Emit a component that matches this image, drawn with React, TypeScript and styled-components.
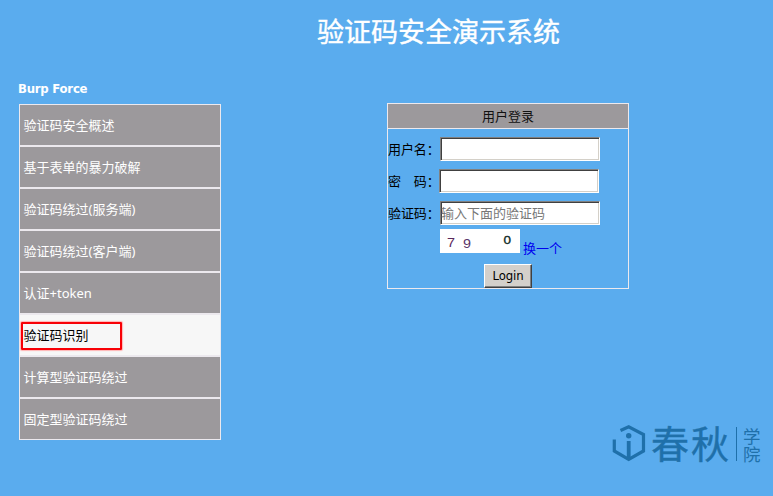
import React from "react";
import styled, { createGlobalStyle } from "styled-components";

const Global = createGlobalStyle`
  * { box-sizing: border-box; }
  body {
    margin: 0;
    background: #5aacee;
    font: 13px/16px "Noto Sans", "Noto Sans CJK SC", sans-serif;
    color: #000;
  }
`;

const Page = styled.div`
  width: 773px;
  height: 496px;
  display: grid;
  grid-template-rows: 79px 1fr;
  overflow: hidden;
`;

const Title = styled.h1`
  margin: 0;
  padding: 12px 0 0 317px;
  font: 400 27px/38px "Noto Sans CJK SC", sans-serif;
  -webkit-text-stroke: 0.4px #fff;
  color: #fff;
  white-space: nowrap;
`;

const Content = styled.div`
  display: flex;
  align-items: flex-start;
`;

const Sidebar = styled.nav`
  width: 202px;
  margin-left: 19px;
`;

const Heading = styled.h2`
  margin: 0 0 0 -1px;
  height: 25px;
  font: 700 13px/19px "DejaVu Sans Condensed", "Noto Sans", sans-serif;
  letter-spacing: -0.23px;
  color: #fff;
`;

const Menu = styled.ul`
  margin: 0;
  padding: 0;
  list-style: none;
`;

const MenuItem = styled.li<{ $active?: boolean }>`
  height: 42px;
  display: flex;
  align-items: center;
  padding-left: ${(p) => (p.$active ? 1 : 3.5)}px;
  border: 1px solid #ece9ee;
  background: ${(p) => (p.$active ? "#f7f7f7" : "#9c999c")};
  color: ${(p) => (p.$active ? "#000" : "#fff")};
`;

const Marker = styled.span`
  width: 101px;
  height: 28px;
  margin-top: 1px;
  padding-left: 0.5px;
  border: 2px solid #f80006;
  border-radius: 1px;
  line-height: 23px;
  box-shadow: 0 0 1px 1px #ffb4b4;
`;

const LoginForm = styled.form`
  width: 242px;
  height: 186px;
  margin: 24px 0 0 166px;
  border: 1px solid #ece9ee;
`;

const FormTitle = styled.div`
  height: 25px;
  border-bottom: 1px solid #ece9ee;
  background: #9c999c;
  text-align: center;
  line-height: 24px;
  color: #111;
`;

const Fields = styled.div`
  display: grid;
  gap: 8px;
  padding-top: 8px;
`;

const Field = styled.label<{ $labelWidth: number }>`
  display: grid;
  grid-template-columns: ${(p) => p.$labelWidth}px 160px;
  height: 24px;
  align-items: center;
  white-space: pre;
`;

const FieldLabel = styled.span`
  letter-spacing: -0.1px;
`;

const Input = styled.input`
  width: 160px;
  height: 24px;
  padding: 0;
  border: 1px solid;
  border-color: #808080 #fff #fff #808080;
  border-radius: 0;
  box-shadow: inset 1px 1px #404040, inset -1px -1px #d4d0c8;
  background: #fff;
  font: inherit;
  outline: 0;
  &::placeholder { color: #777; opacity: 1; }
`;

const CaptchaRow = styled.div`
  display: flex;
  height: 28px;
  margin: 4px 0 0 52px;
  align-items: flex-start;
`;

const Refresh = styled.a`
  margin: 11px 0 0 3px;
  color: #0000ee;
  text-decoration: none;
`;

const LoginButton = styled.button`
  display: block;
  width: 48px;
  height: 24px;
  margin: 7px auto 0;
  padding: 0;
  border: 1px solid;
  border-color: #fff #404040 #404040 #fff;
  box-shadow: inset -1px -1px #808080;
  background: #d4d0cb;
  font: 13px/22px "DejaVu Sans Condensed", "Noto Sans", sans-serif;
  letter-spacing: -0.1px;
  color: #000;
`;

const Watermark = styled.div`
  position: absolute;
  left: 612px;
  top: 425px;
  display: flex;
  align-items: flex-start;
  height: 37px;
  font-family: "Noto Sans CJK SC", sans-serif;
  color: #1f70aa;
`;

const BrandName = styled.span`
  width: 83px;
  margin-left: 5px;
  font-size: 38px;
  line-height: 34px;
  letter-spacing: 2px;
  -webkit-text-stroke: 0.4px #1f70aa;
  white-space: nowrap;
`;

const BrandSuffix = styled.span`
  width: 25px;
  height: 34px;
  margin: 2px 0 0 2px;
  padding-left: 6px;
  border-left: 1px solid #1f70aa;
  font-size: 17.5px;
  line-height: 17.5px;
  word-break: break-all;
`;

const MENU = [
  "验证码安全概述",
  "基于表单的暴力破解",
  "验证码绕过(服务端)",
  "验证码绕过(客户端)",
  "认证+token",
  "验证码识别",
  "计算型验证码绕过",
  "固定型验证码绕过",
];

function Captcha() {
  return (
    <svg width="80" height="24" viewBox="0 0 80 24" fontFamily="Liberation Sans, sans-serif" fontSize="12">
      <rect width="80" height="24" fill="#fff" />
      <text x="7" y="18" fill="#5b285b" textLength="8" lengthAdjust="spacingAndGlyphs">7</text>
      <text x="23" y="18.5" fill="#5a356a" textLength="8" lengthAdjust="spacingAndGlyphs">9</text>
      <text x="63.5" y="14.5" fill="#0b2623" stroke="#0b2623" strokeWidth=".3" fontSize="11.5" textLength="7.5" lengthAdjust="spacingAndGlyphs">0</text>
    </svg>
  );
}

function Brand() {
  return (
    <Watermark>
      <svg width="34" height="37" viewBox="7 10 34 37" fill="none" stroke="#1f70aa" strokeWidth="3.2">
        <path d="M15.5 15.5L23.7 11.8L38.5 19.5V36L23.7 44.5L9.3 36V24.5" />
        <path d="M23.7 26V44" strokeWidth="3.8" />
        <circle cx="23.7" cy="20.8" r="2.7" fill="#1f70aa" stroke="none" />
      </svg>
      <BrandName>春秋</BrandName>
      <BrandSuffix>学院</BrandSuffix>
    </Watermark>
  );
}

export default function App() {
  return (
    <>
      <Global />
      <Page>
        <Title>验证码安全演示系统</Title>
        <Content>
          <Sidebar>
            <Heading>Burp Force</Heading>
            <Menu>
              {MENU.map((label) => {
                const active = label === "验证码识别";
                return (
                  <MenuItem key={label} $active={active}>
                    {active ? <Marker>{label}</Marker> : label}
                  </MenuItem>
                );
              })}
            </Menu>
          </Sidebar>
          <LoginForm onSubmit={(e) => e.preventDefault()}>
            <FormTitle>用户登录</FormTitle>
            <Fields>
              <Field $labelWidth={52}><FieldLabel>用户名：</FieldLabel><Input /></Field>
              <Field $labelWidth={51}><FieldLabel>密&emsp;码：</FieldLabel><Input type="password" /></Field>
              <Field $labelWidth={52}><FieldLabel>验证码：</FieldLabel><Input placeholder="输入下面的验证码" /></Field>
            </Fields>
            <CaptchaRow>
              <Captcha />
              <Refresh href="#">换一个</Refresh>
            </CaptchaRow>
            <LoginButton type="submit">Login</LoginButton>
          </LoginForm>
        </Content>
        <Brand />
      </Page>
    </>
  );
}
